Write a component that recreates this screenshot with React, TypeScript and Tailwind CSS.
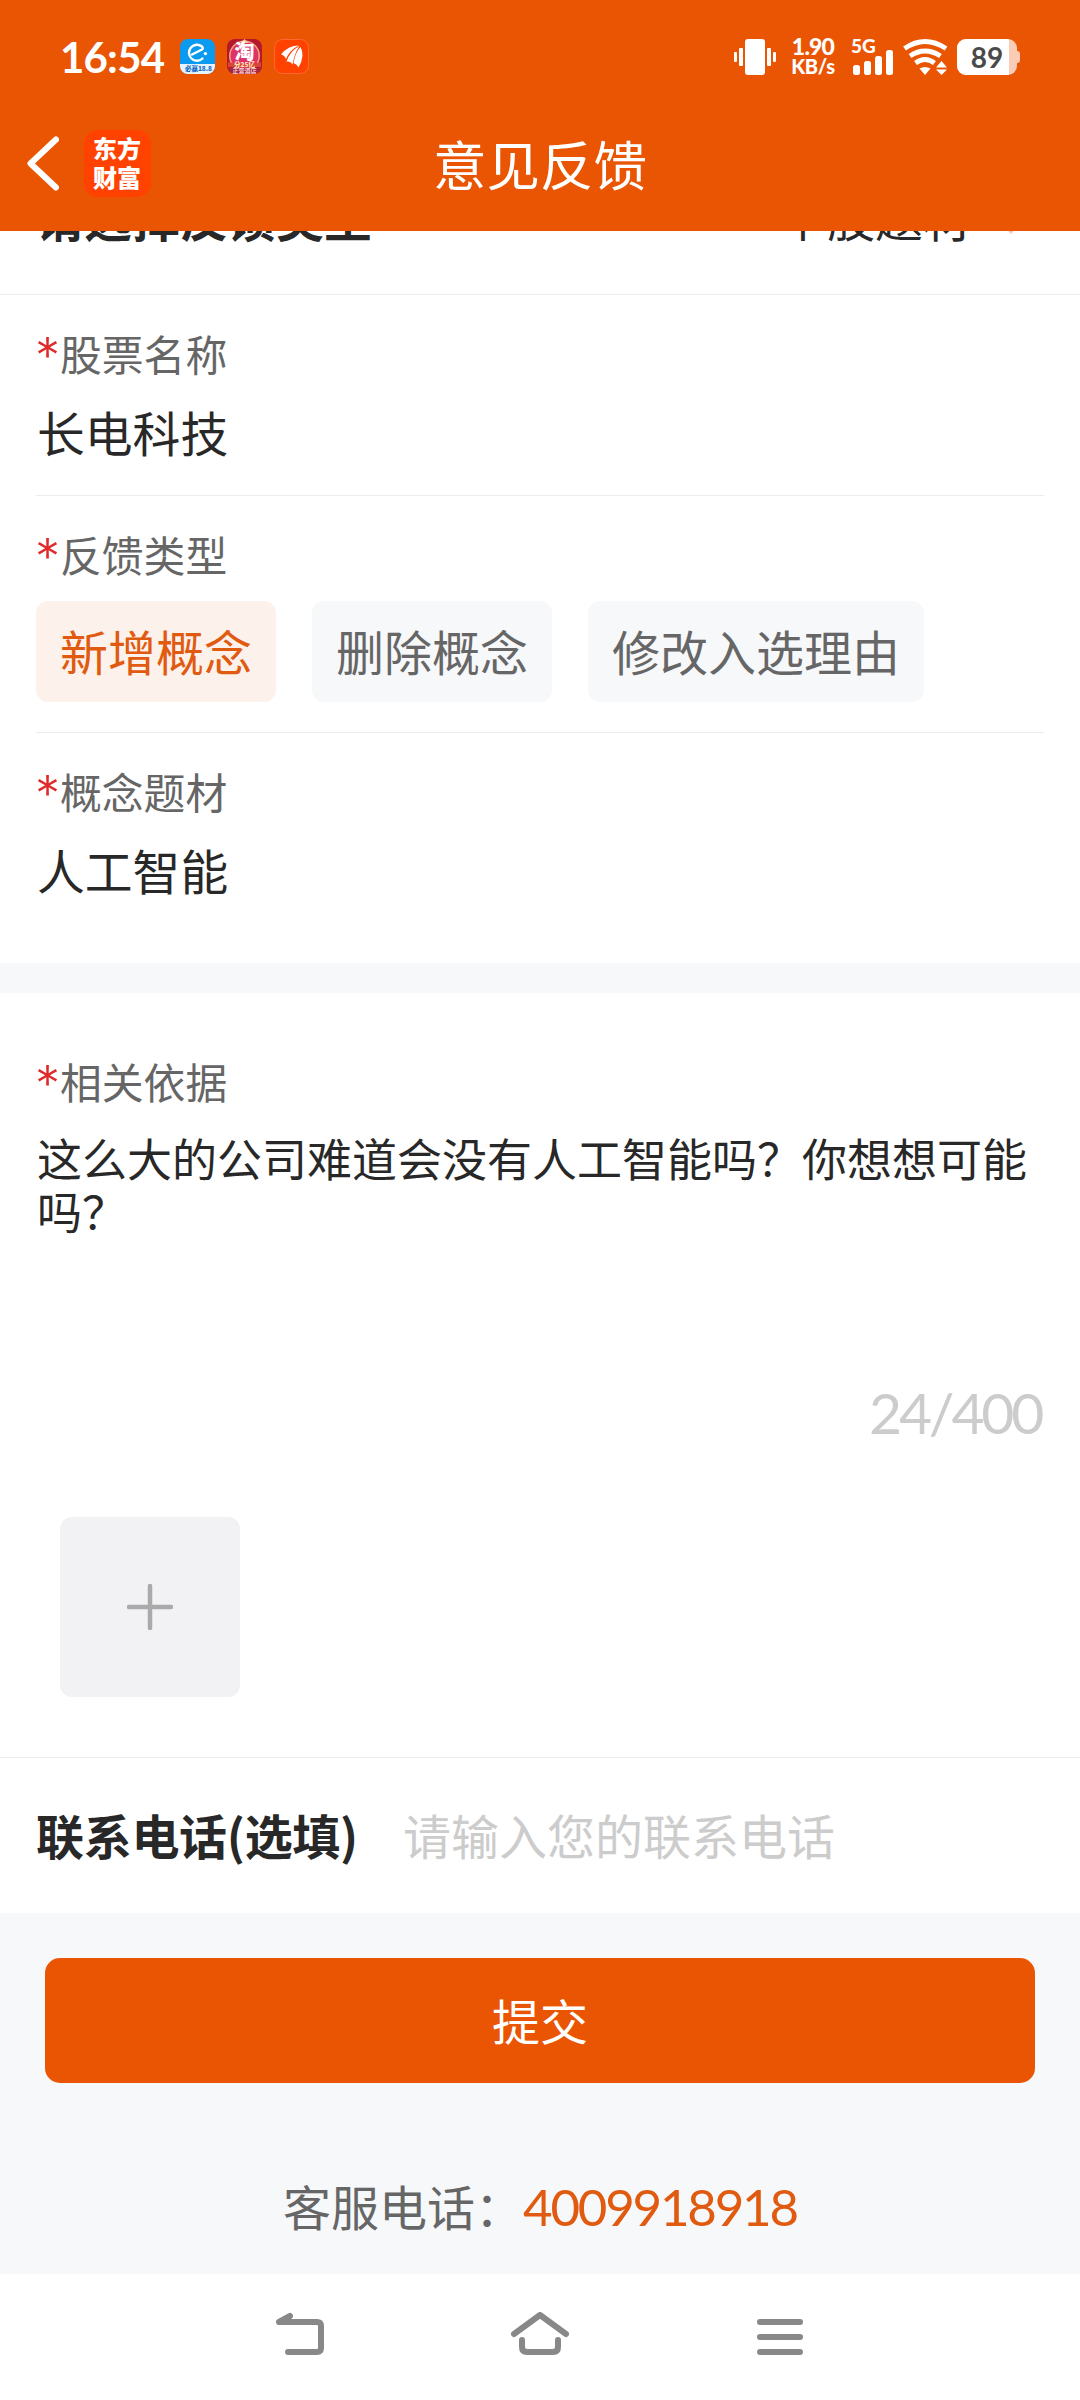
import React, { useState } from 'react';

const FEEDBACK_TYPES = ['新增概念', '删除概念', '修改入选理由'];
const MAX_LENGTH = 400;

const ElemeIcon = () => (
  <svg className="w-[35px] h-[35px]" viewBox="0 0 35 35">
    <rect width="35" height="35" rx="8" fill="#0a9bf0" />
    <path d="M0 25h35v2a8 8 0 0 1-8 8H8a8 8 0 0 1-8-8z" fill="#e6f5fd" />
    <path d="M12 15.500L22 10.500Q23.500 9.500 22 7.500A8 8 0 1 0 22.500 19.500" fill="none" stroke="#fff" strokeWidth="2.4" strokeLinecap="round" strokeLinejoin="round" />
    <circle cx="25.400" cy="14.600" r="1.700" fill="#fff" />
    <text x="18.500" y="32.300" textAnchor="middle" fontSize="6.500" fontWeight="900" fill="#1268c4" fontFamily="Noto Sans CJK SC, sans-serif">必赢18.8</text>
  </svg>
);

const TaobaoIcon = () => (
  <svg className="w-[35px] h-[35px]" viewBox="0 0 35 35">
    <rect width="35" height="35" rx="8" fill="#b3182c" />
    <circle cx="17.5" cy="17" r="15.500" fill="#f3a878" />
    <circle cx="17.5" cy="17" r="14" fill="#e0326a" />
    <path d="M13.500 4l4-4 4 4z" fill="#f7c9a0" />
    <text x="17.5" y="19.500" textAnchor="middle" fontSize="20" fontWeight="900" fill="#fff" fontFamily="Noto Sans CJK SC, sans-serif">淘</text>
    <path d="M1 23q16.500 4 33 0v5H1z" fill="#d8453a" />
    <text x="17.500" y="27.500" textAnchor="middle" fontSize="6.500" fontWeight="900" fill="#ffe3b0" fontFamily="Noto Sans CJK SC, sans-serif">分25亿</text>
    <path d="M1 29h33q-2 6-8 6H9q-6 0-8-6z" fill="#a3283e" />
    <text x="17.500" y="33.700" textAnchor="middle" fontSize="6" fontWeight="700" fill="#f6c9cf" fontFamily="Noto Sans CJK SC, sans-serif">正营酒店</text>
  </svg>
);

const EastMoneyIcon = () => (
  <svg className="w-[35px] h-[35px]" viewBox="0 0 35 35">
    <rect x="0.5" y="0.5" width="34" height="34" rx="8" fill="#ff4200" stroke="#ff6a33" />
    <path d="M7 15.500Q14 6.500 25 6.500Q16 10.500 12 20Q10.500 16 7 15.500z" fill="#fff" />
    <path d="M12.500 22.500Q16 12 25.500 7Q20.500 14 18.500 25.500Q16.500 22 12.500 22.500z" fill="#fff" />
    <path d="M19.500 24Q21.500 13 26.500 8Q31.500 16.500 24.500 28.500Q23 25 19.500 24z" fill="#fff" />
  </svg>
);

const VibrateIcon = () => (
  <svg className="w-[42px] h-9" viewBox="0 0 42 36" fill="#fff">
    <rect x="11" width="20" height="36" rx="3" />
    <rect x="5" y="9" width="4" height="18" rx="1" />
    <rect x="33" y="9" width="4" height="18" rx="1" />
    <rect x="0" y="13" width="3" height="10" rx="1" />
    <rect x="39" y="13" width="3" height="10" rx="1" />
  </svg>
);

const SignalBars = () => (
  <svg className="w-10 h-[25px]" viewBox="0 0 40 25" fill="#fff">
    <rect x="0" y="15" width="7" height="10" rx="2.500" />
    <rect x="11" y="11" width="7" height="14" rx="2.500" />
    <rect x="22" y="6" width="7" height="19" rx="2.500" />
    <rect x="33" y="0" width="7" height="25" rx="2.500" />
  </svg>
);

const WifiIcon = () => (
  <svg className="w-[46px] h-9" viewBox="0 0 46 36">
    <g fill="none" stroke="#fff" strokeWidth="4.800">
      <path d="M1.500 9.500Q22 -4.500 43 9.500" />
      <path d="M7 17Q22 7 37.500 17" />
      <path d="M12.500 24Q22 17 31.500 24" />
    </g>
    <path d="M16.500 29.500Q22 26.500 27.500 29.500L22 36z" fill="#fff" />
    <path d="M33 28.500l5.500-6.500 5.500 6.500zM33 30.500h11l-5.500 5.500z" fill="#fff" />
  </svg>
);

const StatusBar = () => (
  <div className="flex items-center h-[75px] pt-[38px] px-[60px] text-white">
    <span className="w-[120px] text-[42px] leading-[44px] font-bold tracking-[-0.800px] font-[Lato,sans-serif]">16:54</span>
    <div className="flex gap-3">
      <ElemeIcon />
      <TaobaoIcon />
      <EastMoneyIcon />
    </div>
    <div className="ml-auto flex items-center">
      <VibrateIcon />
      <div className="ml-[14px] w-[46px] text-center font-black font-[Lato,sans-serif]">
        <div className="text-[23px] leading-[20px] tracking-[-0.800px]">1.90</div>
        <div className="text-[20px] leading-[21px] tracking-[-0.300px]">KB/s</div>
      </div>
      <div className="ml-[15px] w-[42px] h-9 flex flex-col">
        <span className="h-[11px] text-[19px] leading-[14px] font-black font-[Lato,sans-serif]">5G</span>
        <div className="pl-[2px]">
          <SignalBars />
        </div>
      </div>
      <div className="ml-[10px]">
        <WifiIcon />
      </div>
      <div className="ml-2 flex items-center">
        <div className="w-[60px] h-9 rounded-[9px] overflow-hidden bg-[#f9cdb5]">
          <div className="w-[52px] h-full pl-[8px] bg-white flex items-center justify-center text-[28px] leading-none font-bold text-[#4a4a4a] font-[Lato,sans-serif]">
            89
          </div>
        </div>
        <div className="w-[3px] h-3 rounded-r-sm bg-[#f9cdb5]" />
      </div>
    </div>
  </div>
);

const Header = () => (
  <header className="h-[231px] shrink-0 bg-[#ea5504]">
    <StatusBar />
    <div className="grid grid-cols-3 items-center h-[156px] pt-[22px] text-white">
      <div className="flex items-center pb-[1px] pl-[27px]">
        <svg className="w-8 h-[55px]" viewBox="0 0 32 55" fill="none" stroke="#fff" strokeWidth="6" strokeLinejoin="round" strokeLinecap="round">
          <path d="M29 3.500L3.500 27.500L29 51.500" />
        </svg>
        <div className="ml-[25px] w-[67px] h-[67px] pr-[1px] pb-[4px] rounded-[14px] bg-[#ff4200] flex flex-col items-center justify-center text-[24px] leading-[29px] font-black">
          <span>东方</span>
          <span>财富</span>
        </div>
      </div>
      <h1 className="pb-[3px] text-center text-[53.500px] leading-[70px]">意见反馈</h1>
    </div>
  </header>
);

const FieldLabel: React.FC<{ children: React.ReactNode }> = ({ children }) => (
  <div className="flex h-[62px] items-center text-[41.800px] leading-[56px] text-[#666]">
    <span className="-ml-[1px] w-[25px] pt-[6px] text-[50px] font-light text-[#e02a2a] font-[Inter,sans-serif]">*</span>
    {children}
  </div>
);

const NavBar = () => (
  <nav className="flex h-[126px] pl-[276px] pt-[38px] bg-white">
    <svg className="w-12 h-[43px]" viewBox="0 0 48 43" fill="none" stroke="#888" strokeWidth="6" strokeLinecap="round" strokeLinejoin="round">
      <path d="M14 4L3 10H41Q45 10 45 14V36Q45 40 41 40H12" />
    </svg>
    <svg className="ml-[187px] w-[58px] h-[43px]" viewBox="0 0 58 43" fill="none" stroke="#888" strokeWidth="6" strokeLinecap="round" strokeLinejoin="round">
      <path d="M3 22L29 3L55 22" />
      <path d="M11 28V35Q11 40 16 40H42Q47 40 47 35V28" />
    </svg>
    <svg className="ml-[188px] w-[46px] h-[43px]" viewBox="0 0 46 43" stroke="#888" strokeWidth="6" strokeLinecap="round">
      <path d="M3 10H43M3 25H43M3 40H43" />
    </svg>
  </nav>
);

export default function App() {
  const [selectedType, setSelectedType] = useState(FEEDBACK_TYPES[0]);
  const [reason, setReason] = useState('这么大的公司难道会没有人工智能吗？你想想可能吗？');
  const [phone, setPhone] = useState('');

  return (
    <div className="w-[1080px] h-[2400px] flex flex-col overflow-hidden bg-white text-[#282828] font-['Noto_Sans_CJK_SC',sans-serif]">
      <Header />

      {/* row scrolled half under the header */}
      <div className="flex h-16 shrink-0 items-end overflow-hidden border-b border-[#ececec] pl-9 pr-[60px] pb-[50px] text-[48px] leading-[56px]">
        <span className="font-bold">请选择反馈类型</span>
        <span className="ml-auto">个股题材</span>
        <svg className="ml-[31px] mb-[10px] w-[18px] h-[10px]" viewBox="0 0 18 10" fill="#f6c3b6">
          <path d="M0 0h18L9 10z" />
        </svg>
      </div>

      <div className="px-9">
        <div className="h-[201px] pt-[27px] border-b border-[#ececec]">
          <FieldLabel>股票名称</FieldLabel>
          <div className="mt-3 pl-[1px] text-[47.800px] leading-[72px]">长电科技</div>
        </div>

        <div className="h-[237px] pt-[27px] border-b border-[#ececec]">
          <FieldLabel>反馈类型</FieldLabel>
          <div className="mt-4 flex gap-9">
            {FEEDBACK_TYPES.map((type) => (
              <button
                key={type}
                onClick={() => setSelectedType(type)}
                className={`h-[101px] px-6 pb-[3px] rounded-xl text-[48px] leading-none ${
                  selectedType === type ? 'bg-[#fdf1eb] text-[#e05a10]' : 'bg-[#f7f8fa] text-[#666]'
                }`}
              >
                {type}
              </button>
            ))}
          </div>
        </div>

        <div className="h-[230px] pt-[27px]">
          <FieldLabel>概念题材</FieldLabel>
          <div className="mt-3 pl-[1px] text-[47.800px] leading-[72px]">人工智能</div>
        </div>
      </div>

      <div className="h-[30px] shrink-0 bg-[#f7f8fa]" />

      <div className="h-[765px] shrink-0 pt-[57px] px-9 border-b border-[#ececec]">
        <FieldLabel>相关依据</FieldLabel>
        <textarea
          value={reason}
          maxLength={MAX_LENGTH}
          onChange={(e) => setReason(e.target.value)}
          className="mt-[19px] pl-[1px] block w-full h-[220px] resize-none outline-none text-[45px] leading-[53px]"
        />
        <div className="mt-[31px] pr-[3px] text-right text-[57px] leading-[60px] tracking-[-3.200px] text-[#ccc] font-[Lato,sans-serif]">
          {reason.length}/{MAX_LENGTH}
        </div>
        <button className="mt-[75px] ml-6 w-[180px] h-[180px] rounded-xl bg-[#f2f2f4] flex items-center justify-center">
          <svg className="w-[46px] h-[46px]" viewBox="0 0 46 46" stroke="#aaa" strokeWidth="4.500" strokeLinecap="round">
            <path d="M2 23H44M23 2V44" />
          </svg>
        </button>
      </div>

      <div className="flex h-[155px] shrink-0 items-center pl-9 pb-[3px] text-[48px] leading-none">
        <label className="w-[367px] font-bold tracking-[-0.300px]">联系电话(选填)</label>
        <input
          value={phone}
          onChange={(e) => setPhone(e.target.value)}
          placeholder="请输入您的联系电话"
          className="w-[600px] h-[72px] outline-none placeholder:text-[#ccc]"
        />
      </div>

      <div className="h-[361px] shrink-0 pt-[45px] px-[45px] bg-[#f7f8fa]">
        <button className="w-full h-[125px] pb-[3px] rounded-[15px] bg-[#ea5504] text-white text-[48px] leading-none">提交</button>
        <div className="mt-[86px] pl-[238px] flex items-center h-[72px] text-[48px] leading-none text-[#666]">
          <span className="w-[240px]">客服电话：</span>
          <a className="pt-[3px] text-[51px] tracking-[-2.200px] text-[#e05a10] font-[Lato,sans-serif]">4009918918</a>
        </div>
      </div>

      <NavBar />
    </div>
  );
}
